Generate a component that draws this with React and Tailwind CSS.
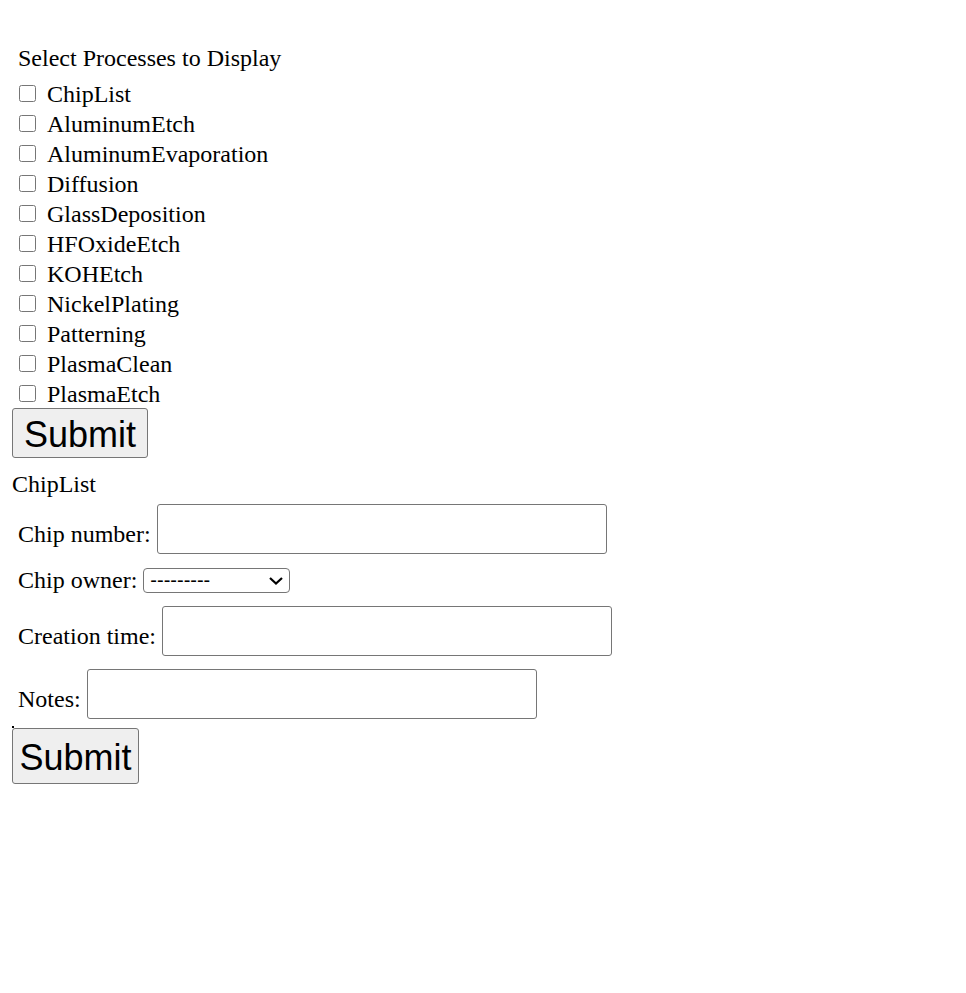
import React from 'react';

const processes = [
  'ChipList',
  'AluminumEtch',
  'AluminumEvaporation',
  'Diffusion',
  'GlassDeposition',
  'HFOxideEtch',
  'KOHEtch',
  'NickelPlating',
  'Patterning',
  'PlasmaClean',
  'PlasmaEtch',
];

function TextRow({ label, className }) {
  return (
    <div className={`flex items-start ml-[6px] ${className}`}>
      <span className="pt-[15px] whitespace-nowrap">{label}</span>
      <input
        type="text"
        className="ml-[6px] w-[450px] h-[50px] border border-[#767676] rounded-[3px] bg-white"
      />
    </div>
  );
}

function App() {
  return (
    <div className="min-h-screen bg-white text-black font-['Liberation_Serif',serif] text-[24px] leading-[30px] pt-[43px] pl-[12px]">
      {/* Process picker */}
      <form>
        <div className="ml-[6px] h-[30px]">Select Processes to Display</div>
        <div className="mt-[6px] ml-[6px]">
          {processes.map((p) => (
            <label key={p} className="flex items-start h-[30px]">
              <input type="checkbox" className="w-[17px] h-[17px] m-0 mt-[6px] ml-px" />
              <span className="ml-[11px]">{p}</span>
            </label>
          ))}
        </div>
        <button
          type="button"
          className="-mt-px block w-[136px] h-[50px] border border-[#767676] rounded-[3px] bg-[#efefef] font-['Liberation_Sans',Arial,sans-serif] text-[36px] leading-[41px] pt-[2px]"
        >
          Submit
        </button>
      </form>

      {/* ChipList form */}
      <div className="mt-[11px] h-[30px]">ChipList</div>
      <form>
        <TextRow label="Chip number:" className="mt-[5px]" />
        <div className="flex items-start ml-[6px] mt-[11px] h-[30px]">
          <span className="whitespace-nowrap">Chip owner:</span>
          <div className="relative ml-[6px] mt-[3px] w-[147px] h-[25px]">
            <select className="block appearance-none w-[147px] h-[25px] border border-[#767676] rounded-[4px] bg-white pl-[6px] py-0 font-['Liberation_Sans',Arial,sans-serif] text-[20px] leading-[23px]">
              <option>---------</option>
            </select>
            <svg
              className="absolute right-[7px] top-[9px] pointer-events-none"
              width="14"
              height="8"
              viewBox="0 0 14 8"
              fill="none"
            >
              <path d="M1 1l6 5.5L13 1" stroke="black" strokeWidth="2.2" />
            </svg>
          </div>
        </div>
        <TextRow label="Creation time:" className="mt-[11px]" />
        <TextRow label="Notes:" className="mt-[13px]" />
        <div className="mt-[7px] w-[2px] h-[2px] bg-black"></div>
        <button
          type="button"
          className="block w-[127px] h-[56px] border border-[#767676] rounded-[3px] bg-[#efefef] font-['Liberation_Sans',Arial,sans-serif] text-[36px] leading-[41px] pt-[3px]"
        >
          Submit
        </button>
      </form>
    </div>
  );
}

export default App;
